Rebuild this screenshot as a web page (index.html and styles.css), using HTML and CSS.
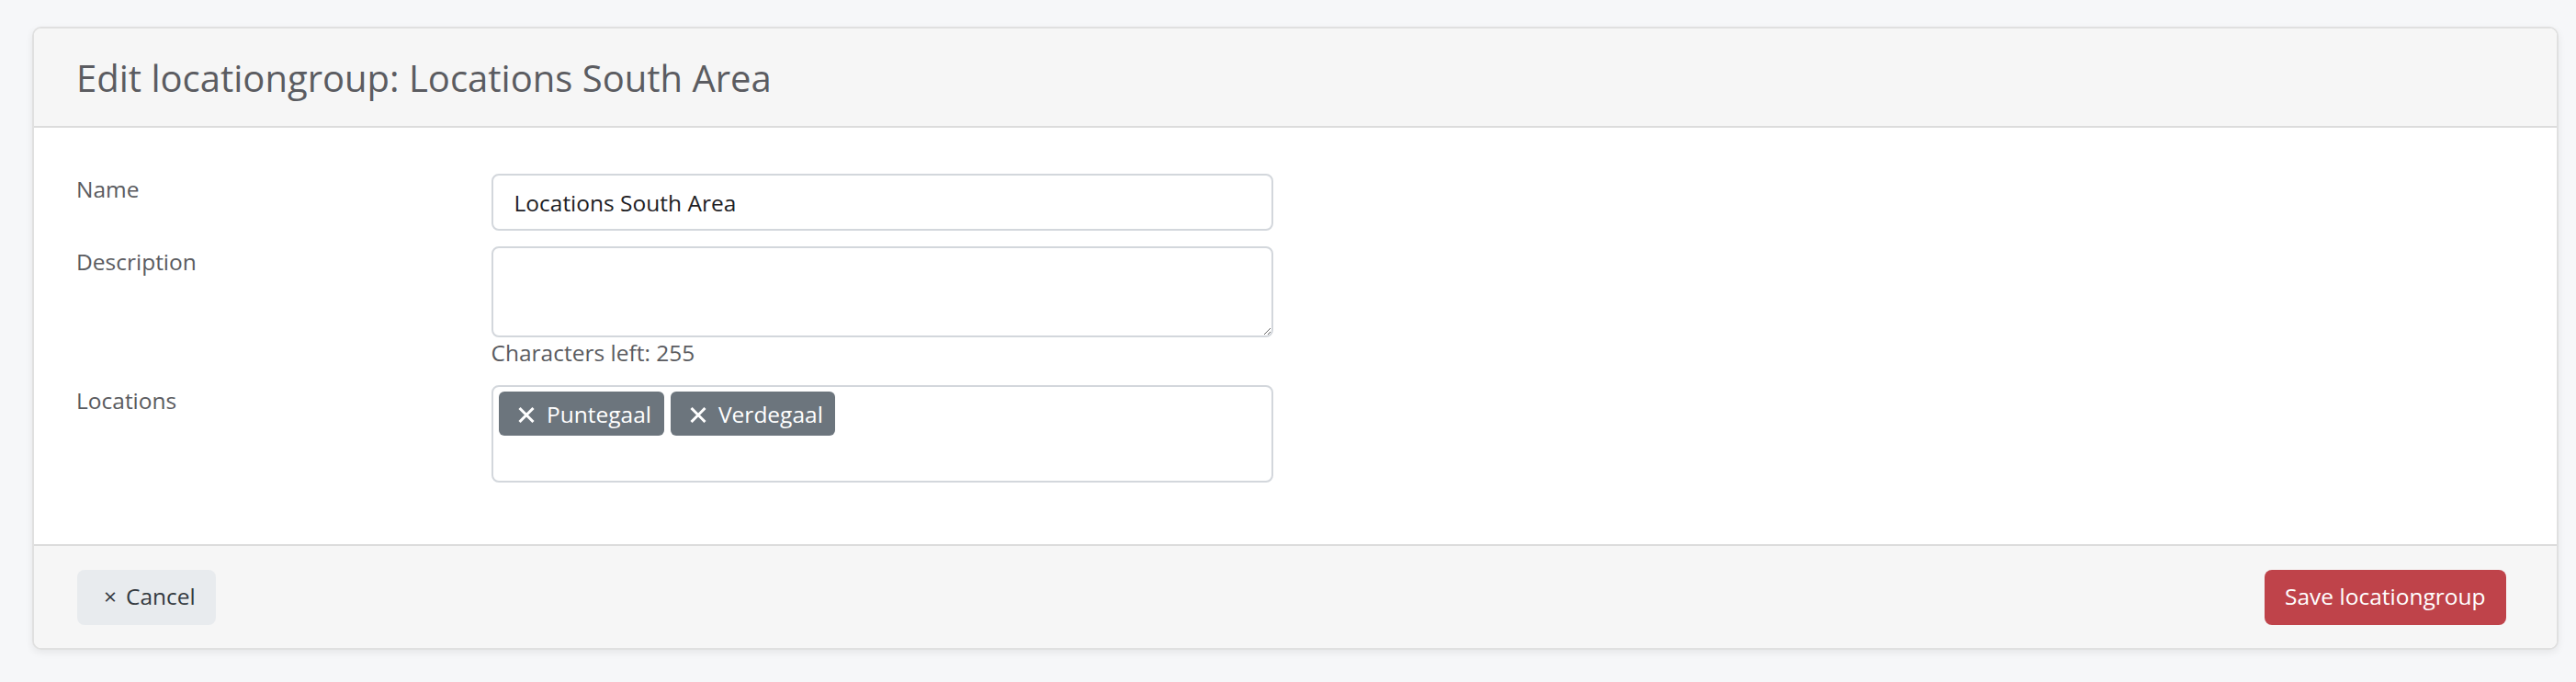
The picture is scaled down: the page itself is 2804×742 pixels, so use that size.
FILE: index.html
```html
<!DOCTYPE html>
<html lang="en">
<head>
<meta charset="utf-8">
<title>Edit locationgroup</title>
<link rel="stylesheet" href="styles.css">
</head>
<body>
<div class="page">
  <div class="card">
    <div class="card-header">
      <h1 class="title">Edit locationgroup: Locations South Area</h1>
    </div>
    <form class="card-body">
      <div class="row">
        <label class="label" for="name">Name</label>
        <div class="field">
          <input id="name" class="input" type="text" value="Locations South Area">
        </div>
      </div>
      <div class="row">
        <label class="label" for="desc">Description</label>
        <div class="field">
          <textarea id="desc" class="textarea"></textarea>
          <div class="help">Characters left: 255</div>
        </div>
      </div>
      <div class="row">
        <label class="label">Locations</label>
        <div class="field">
          <div class="tagbox">
            <span class="tag"><svg class="tag-x" width="18" height="17" viewBox="0 0 18 17"><path d="M1.5 1 L16.5 16 M16.5 1 L1.5 16" stroke="#fff" stroke-width="3"/></svg>Puntegaal</span>
            <span class="tag"><svg class="tag-x" width="18" height="17" viewBox="0 0 18 17"><path d="M1.5 1 L16.5 16 M16.5 1 L1.5 16" stroke="#fff" stroke-width="3"/></svg>Verdegaal</span>
          </div>
        </div>
      </div>
    </form>
    <div class="card-footer">
      <button class="btn btn-cancel" type="button"><span class="times">×</span>Cancel</button>
      <button class="btn btn-save" type="button">Save locationgroup</button>
    </div>
  </div>
</div>
</body>
</html>
```
FILE: styles.css
```css
html, body {
  margin: 0;
  padding: 0;
  background: #f6f7f9;
  font-family: "Open Sans", "Noto Sans", sans-serif;
  font-size: 24.5px;
}

.page {
  padding: 29px 19px 30px 35px;
}

.card {
  background: #ffffff;
  border: 2px solid #e0e0e0;
  border-radius: 10px;
  box-shadow: 0 3px 8px rgba(0, 0, 0, 0.07);
  overflow: hidden;
}

.card-header {
  background: #f6f6f6;
  border-bottom: 2px solid #dcdcdc;
  padding: 28.5px 46px 28.5px 46px;
}

.title {
  margin: 0;
  font-size: 40px;
  font-weight: 400;
  line-height: 49px;
  color: #5b5c61;
}

.card-body {
  display: flex;
  flex-direction: column;
  gap: 17px;
  padding: 50px 46px 67px 46px;
}

.row {
  display: grid;
  grid-template-columns: 451.5px 851px;
  align-items: start;
}

.label {
  line-height: 33px;
  color: #5a5b60;
}

.field {
  display: flex;
  flex-direction: column;
}

.input {
  box-sizing: border-box;
  height: 62px;
  margin: 0;
  padding: 0 23px;
  border: 2px solid #d3d7dc;
  border-radius: 8px;
  font-family: inherit;
  font-size: 24.5px;
  color: #1d2024;
  background: #fff;
  outline: none;
}

.textarea {
  box-sizing: border-box;
  height: 99px;
  margin: 0;
  padding: 12px 23px;
  border: 2px solid #d3d7dc;
  border-radius: 8px;
  font-family: inherit;
  font-size: 24.5px;
  color: #1d2024;
  background: #fff;
  outline: none;
}

.help {
  line-height: 33px;
  margin-bottom: 2px;
  color: #5a5b60;
}

.tagbox {
  box-sizing: border-box;
  height: 106px;
  border: 2px solid #d3d7dc;
  border-radius: 8px;
  padding: 5px 6px;
  display: flex;
  align-items: flex-start;
  gap: 7px;
}

.tag {
  box-sizing: border-box;
  display: inline-flex;
  align-items: center;
  height: 48px;
  padding: 2px 13.5px 0 21px;
  background: #6c757d;
  color: #ffffff;
  border-radius: 6px;
  font-size: 24.5px;
  line-height: 1;
  white-space: nowrap;
}

.tag-x {
  display: block;
  margin-right: 13.5px;
  flex: none;
}

.card-footer {
  background: #f6f6f6;
  border-top: 2px solid #dcdcdc;
  height: 111px;
  padding: 0 55px 0 47px;
  display: flex;
  align-items: center;
  justify-content: space-between;
}

.btn {
  box-sizing: border-box;
  height: 60px;
  margin: 0;
  border: none;
  border-radius: 8px;
  font-family: inherit;
  font-size: 24.5px;
  line-height: 1;
  display: inline-flex;
  align-items: center;
  white-space: nowrap;
  cursor: pointer;
}

.btn-cancel {
  padding: 0 22.5px 0 29px;
  background: #e8ebee;
  color: #343a40;
}

.times {
  margin-right: 10px;
}

.btn-save {
  padding: 0 22.5px;
  justify-content: center;
  background: #bf434a;
  color: #ffffff;
}
```
